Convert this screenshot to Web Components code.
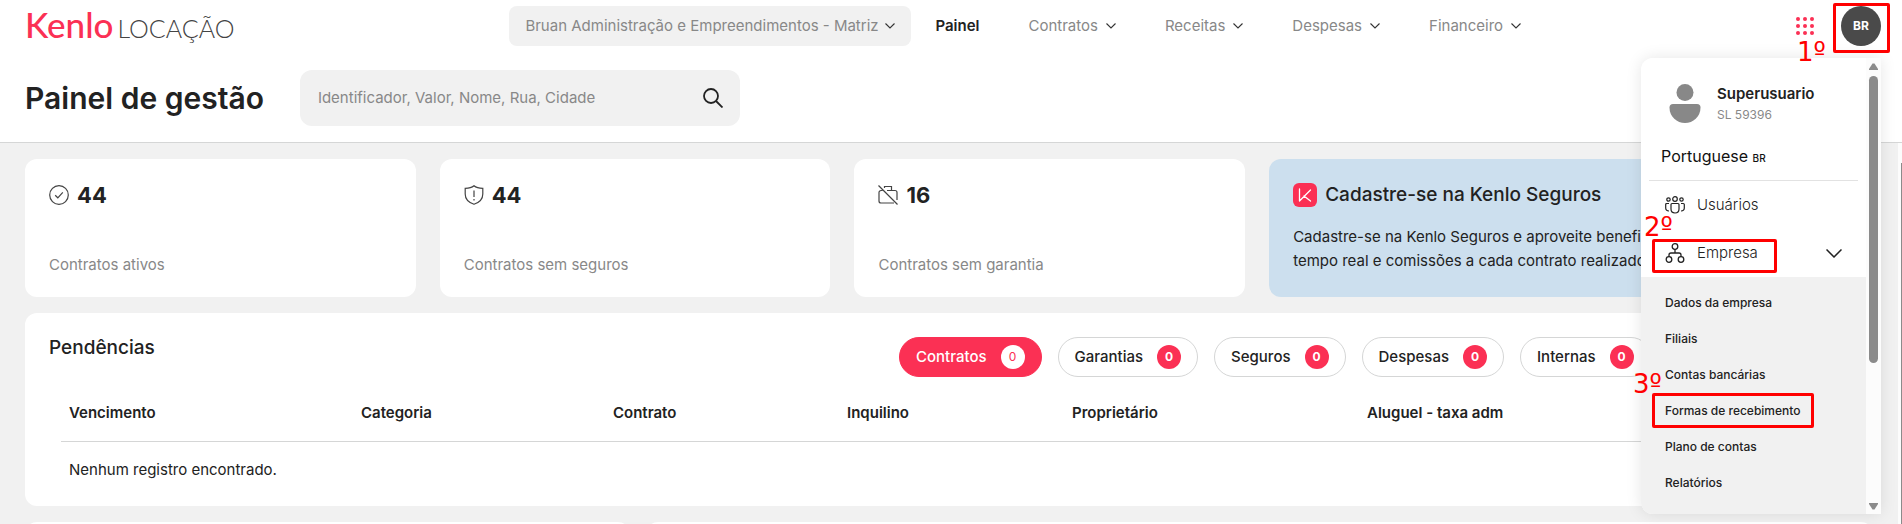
<!DOCTYPE html>
<html lang="pt-BR">
<head>
<meta charset="utf-8">
<title>Kenlo Locação</title>
<style>
  body {
    margin: 0;
    font-family: Inter, "Liberation Sans", sans-serif;
    font-size: 16px;
    line-height: 24px;
    color: #222222;
    --brand: #fb3054;
    --grey: #f1f1f1;
    --muted: #888888;
    --line: #d5d6d6;
  }
</style>
</head>
<body>
<kenlo-page>
  <kenlo-header slot="header">
    <kenlo-logo slot="logo">LOCAÇÃO</kenlo-logo>
    <company-select slot="nav" label="Empresa">Bruan Administração e Empreendimentos - Matriz</company-select>
    <nav-item slot="nav" active>Painel</nav-item>
    <nav-item slot="nav">Contratos</nav-item>
    <nav-item slot="nav">Receitas</nav-item>
    <nav-item slot="nav">Despesas</nav-item>
    <nav-item slot="nav">Financeiro</nav-item>
    <user-actions slot="actions" initials="BR"></user-actions>
    <span slot="title">Painel de gestão</span>
    <search-box slot="search" hint="Identificador, Valor, Nome, Rua, Cidade"></search-box>
  </kenlo-header>

  <stat-card slot="stats" icon="check" value="44">Contratos ativos</stat-card>
  <stat-card slot="stats" icon="shield" value="44">Contratos sem seguros</stat-card>
  <stat-card slot="stats" icon="caseOff" value="16">Contratos sem garantia</stat-card>
  <promo-card slot="stats" heading="Cadastre-se na Kenlo Seguros">Cadastre-se na Kenlo Seguros e aproveite beneficios<br>tempo real e comissões a cada contrato realizado</promo-card>

  <pending-panel heading="Pendências">
    <count-tab slot="tabs" count="0" active>Contratos</count-tab>
    <count-tab slot="tabs" count="0">Garantias</count-tab>
    <count-tab slot="tabs" count="0">Seguros</count-tab>
    <count-tab slot="tabs" count="0">Despesas</count-tab>
    <count-tab slot="tabs" count="0">Internas</count-tab>
  </pending-panel>

  <user-menu slot="overlay" name="Superusuario" code="SL 59396"></user-menu>
  <step-mark slot="overlay" style="--right: 12px; --top: 3px; --width: 57px; --height: 50px; --label-x: -39px; --label-y: 34px">1º</step-mark>
  <step-mark slot="overlay" style="--right: 125px; --top: 239px; --width: 125px; --height: 34px; --label-x: -11px; --label-y: -27px">2º</step-mark>
  <step-mark slot="overlay" style="--right: 88px; --top: 393px; --width: 162px; --height: 35px; --label-x: -22px; --label-y: -24px">3º</step-mark>
</kenlo-page>

<script>
const icons = {
  chevron: `<svg width="10" height="6" viewBox="0 0 10 6" fill="none" stroke="#333" stroke-width="1.1"><path d="M.5.5 5 5l4.500-4.500"/></svg>`,
  chevronBig: `<svg width="16" height="9" viewBox="0 0 16 9" fill="none" stroke="#222" stroke-width="1.500"><path d="M.5.5 8 8 15.500.5"/></svg>`,
  search: `<svg width="20" height="20" viewBox="0 0 20 20" fill="none" stroke="#222" stroke-width="1.800"><circle cx="8" cy="8" r="7"/><path d="m13 13 6.500 6.500"/></svg>`,
  check: `<svg width="20" height="20" viewBox="0 0 20 20" fill="none" stroke="#444" stroke-width="1.200"><circle cx="10" cy="10" r="9.300"/><path d="m6.200 10.300 2.600 2.500 5-5.500"/></svg>`,
  shield: `<svg width="20" height="20" viewBox="0 0 20 20" fill="none" stroke="#444" stroke-width="1.200"><path d="M10 .8C8 2.500 4.500 3.300 1.200 3.300V9c0 5 3.500 8.500 8.800 10.300C15.300 17.500 18.800 14 18.800 9V3.300C15.500 3.300 12 2.500 10 .8Z"/><path d="M10 5.500v6.500M10 14v1.500"/></svg>`,
  caseOff: `<svg width="20" height="20" viewBox="0 0 20 20" fill="none" stroke="#444" stroke-width="1.200"><path d="M.5.5l19 19M4.500 5.500H3a2 2 0 0 0-2 2V16a2 2 0 0 0 2 2h13M9 5.500h8a2 2 0 0 1 2 2V15M6.500 3V1.500h7v4"/></svg>`,
  brand: `<svg width="24" height="24" viewBox="0 0 24 24"><rect width="24" height="24" rx="6" fill="#fb3054"/><path d="M6.500 6v12L17.500 7M11 13l6.500 5" fill="none" stroke="#fff" stroke-width="1.300" stroke-linecap="round" stroke-linejoin="round"/></svg>`,
  apps: `<svg width="18" height="18" viewBox="0 0 18 18" fill="#fb3054"><circle cx="2" cy="2" r="2"/><circle cx="9" cy="2" r="2"/><circle cx="16" cy="2" r="2"/><circle cx="2" cy="9" r="2"/><circle cx="9" cy="9" r="2"/><circle cx="16" cy="9" r="2"/><circle cx="2" cy="16" r="2"/><circle cx="9" cy="16" r="2"/><circle cx="16" cy="16" r="2"/></svg>`,
  person: `<svg width="32" height="39" viewBox="0 0 32 39" fill="#888"><circle cx="16" cy="8.500" r="8.500"/><path d="M4 20h24q3.500 0 3.500 3.500C31.500 33 24 39 16 39S.5 33 .5 23.500Q.5 20 4 20Z"/></svg>`,
  users: `<svg width="20" height="18" viewBox="0 0 20 18" fill="none" stroke="#222" stroke-width="1.200"><circle cx="10" cy="3" r="2.300"/><circle cx="3.500" cy="3.500" r="1.700"/><circle cx="16.500" cy="3.500" r="1.700"/><path d="M6 8.500q0-1 1-1h6q1 0 1 1V13q0 4-4 4t-4-4ZM4 7.500H1.700q-1 0-1 1V12q0 2.800 3.300 3M16 7.500h2.300q1 0 1 1V12q0 2.800-3.300 3"/></svg>`,
  company: `<svg width="20" height="20" viewBox="0 0 20 20" fill="none" stroke="#222" stroke-width="1.300"><circle cx="10" cy="3.500" r="2.800"/><circle cx="4" cy="16.500" r="2.800"/><circle cx="16" cy="16.500" r="2.800"/><path d="M10 6.300V10M4 13.700V12q0-2 2-2h8q2 0 2 2v1.700"/></svg>`,
};

// Clones the given markup into an open shadow root
function render(host, html) {
  const template = document.createElement('template');
  template.innerHTML = html;
  host.attachShadow({ mode: 'open' }).appendChild(template.content.cloneNode(true));
}

class KenloPage extends HTMLElement {
  constructor() {
    super();
    render(this, /*html*/`
      <style>
        :host { display: flex; flex-direction: column; height: 100vh; position: relative; overflow: hidden; background: var(--grey); }
        .body { display: flex; flex: 1; min-height: 0; overflow: hidden; }
        main { flex: 1; min-width: 0; display: flex; flex-direction: column; gap: 16px; padding: 16px 25px 0; }
        .stats { display: grid; grid-template-columns: 22fr 22fr 22fr 34fr; gap: 24px; }
        .charts { display: grid; grid-template-columns: 33fr 67fr; gap: 16px; }
        .charts section { height: 240px; border-radius: 12px; background: white; }
        .scroll { display: flex; justify-content: flex-end; width: 4px; padding-top: 20px; box-sizing: border-box; background: #fcfcfc; }
        .scroll i { width: 1px; background: #8b8b8b; }
      </style>
      <slot name="header"></slot>
      <div class="body">
        <main>
          <div class="stats"><slot name="stats"></slot></div>
          <slot></slot>
          <div class="charts"><section></section><section></section></div>
        </main>
        <div class="scroll"><i></i></div>
      </div>
      <slot name="overlay"></slot>
    `);
  }
}

class KenloHeader extends HTMLElement {
  constructor() {
    super();
    render(this, /*html*/`
      <style>
        :host { display: block; background: white; border-bottom: 1px solid var(--line); }
        .top { display: flex; align-items: center; justify-content: space-between; height: 40px; padding: 6px 21px 0 25px; }
        nav { display: flex; align-items: center; }
        .bottom { display: flex; align-items: center; gap: 36px; padding: 24px 25px 16px; }
        h1 { margin: 0; font-size: 30px; line-height: 40px; font-weight: 600; }
      </style>
      <div class="top">
        <slot name="logo"></slot>
        <nav><slot name="nav"></slot></nav>
        <slot name="actions"></slot>
      </div>
      <div class="bottom">
        <h1><slot name="title"></slot></h1>
        <slot name="search"></slot>
      </div>
    `);
  }
}

class KenloLogo extends HTMLElement {
  constructor() {
    super();
    render(this, /*html*/`
      <style>
        :host { display: block; }
        a { display: flex; align-items: baseline; gap: 4px; color: #444; font-family: Lato, sans-serif; font-size: 25px; font-weight: 300; line-height: 40px; text-decoration: none; }
        b { color: var(--brand); font-size: 35px; font-weight: 500; }
      </style>
      <a href="#"><b>Kenlo</b><slot></slot></a>
    `);
  }
}

class CompanySelect extends HTMLElement {
  constructor() {
    super();
    render(this, /*html*/`
      <style>
        :host { display: grid; align-items: center; margin-right: 24px; }
        select { grid-area: 1 / 1; appearance: none; height: 40px; padding: 0 32px 0 16px; border: 0; border-radius: 8px; background: var(--grey); color: var(--muted); font: inherit; font-size: 15px; }
        svg { grid-area: 1 / 1; justify-self: end; margin-right: 16px; pointer-events: none; }
      </style>
      <select aria-label="${this.getAttribute('label')}"><option>${this.textContent}</option></select>
      ${icons.chevron}
    `);
  }
}

class NavItem extends HTMLElement {
  constructor() {
    super();
    const active = this.hasAttribute('active');
    render(this, /*html*/`
      <style>
        :host { display: block; margin-right: 49px; }
        :host(:last-of-type) { margin-right: 0; }
        a, button { display: flex; align-items: center; gap: 8px; padding: 0; border: 0; background: none; color: var(--muted); font: inherit; font-size: 15px; text-decoration: none; }
        a { color: #222; font-weight: 600; }
      </style>
      ${active ? '<a href="#"><slot></slot></a>' : `<button><slot></slot>${icons.chevron}</button>`}
    `);
  }
}

class UserActions extends HTMLElement {
  constructor() {
    super();
    render(this, /*html*/`
      <style>
        :host { display: flex; align-items: center; gap: 27px; }
        button { display: flex; align-items: center; justify-content: center; padding: 0; border: 0; background: none; font: inherit; }
        .avatar { width: 40px; height: 40px; border-radius: 50%; background: #4a4a4a; color: white; font-size: 12px; font-weight: 700; }
      </style>
      <button aria-label="Aplicativos">${icons.apps}</button>
      <button class="avatar">${this.getAttribute('initials')}</button>
    `);
  }
}

class SearchBox extends HTMLElement {
  constructor() {
    super();
    render(this, /*html*/`
      <style>
        :host { display: block; width: 440px; }
        form { display: flex; align-items: center; height: 56px; padding: 0 17px 0 18px; border-radius: 12px; background: var(--grey); }
        input { flex: 1; min-width: 0; padding: 0; border: 0; background: none; font: inherit; font-size: 15px; outline: 0; }
        input::placeholder { color: var(--muted); }
        button { display: flex; padding: 0; border: 0; background: none; }
      </style>
      <form>
        <input type="text" aria-label="Pesquisar" placeholder="${this.getAttribute('hint')}">
        <button type="button" aria-label="Buscar">${icons.search}</button>
      </form>
    `);
  }
}

class StatCard extends HTMLElement {
  constructor() {
    super();
    render(this, /*html*/`
      <style>
        :host { display: flex; flex-direction: column; justify-content: space-between; box-sizing: border-box; min-height: 138px; padding: 24px 24px 20px; border-radius: 12px; background: white; }
        div { display: flex; align-items: center; gap: 8px; }
        strong { font-size: 22px; font-weight: 700; }
        p { margin: 0; color: var(--muted); font-size: 15px; }
      </style>
      <div>${icons[this.getAttribute('icon')]}<strong>${this.getAttribute('value')}</strong></div>
      <p><slot></slot></p>
    `);
  }
}

class PromoCard extends HTMLElement {
  constructor() {
    super();
    render(this, /*html*/`
      <style>
        :host { display: block; box-sizing: border-box; padding: 24px; border-radius: 12px; background: #ccdfee; }
        h2 { display: flex; align-items: center; gap: 8px; margin: 0; font-size: 19px; font-weight: 500; }
        p { margin: 18px 0 0; font-size: 15px; }
      </style>
      <h2>${icons.brand}<span>${this.getAttribute('heading')}</span></h2>
      <p><slot></slot></p>
    `);
  }
}

class CountTab extends HTMLElement {
  constructor() {
    super();
    render(this, /*html*/`
      <style>
        :host { display: block; }
        button { display: flex; align-items: center; gap: 14px; height: 40px; padding: 0 16px; border: 1px solid var(--line); border-radius: 20px; background: white; color: #222; font: inherit; font-size: 15px; font-weight: 500; }
        span { width: 24px; border-radius: 50%; background: var(--brand); color: white; font-size: 12px; font-weight: 700; text-align: center; }
        :host([active]) button { border-color: var(--brand); background: var(--brand); color: white; }
        :host([active]) span { background: white; color: var(--brand); font-weight: 400; }
      </style>
      <button><slot></slot><span>${this.getAttribute('count')}</span></button>
    `);
  }
}

class PendingPanel extends HTMLElement {
  constructor() {
    super();
    render(this, /*html*/`
      <style>
        :host { display: block; padding: 24px 24px 12px; border-radius: 12px; background: white; }
        header { display: grid; grid-template-columns: 17fr 19fr; }
        h2 { margin: 0; font-size: 19px; line-height: 22px; font-weight: 500; }
        .tabs { display: flex; gap: 16px; }
        .table { padding: 8px 12px 0; }
        table { width: 100%; table-layout: fixed; border-collapse: collapse; font-size: 15px; text-align: left; }
        th { height: 56px; padding: 0 8px; border-bottom: 1px solid var(--line); font-weight: 600; }
        td { height: 48px; padding: 4px 8px 0; }
      </style>
      <header>
        <h2>${this.getAttribute('heading')}</h2>
        <div class="tabs"><slot name="tabs"></slot></div>
      </header>
      <div class="table">
        <table>
          <colgroup><col style="width: 292px"><col style="width: 252px"><col style="width: 234px"><col style="width: 225px"><col style="width: 295px"><col></colgroup>
          <thead><tr><th>Vencimento</th><th>Categoria</th><th>Contrato</th><th>Inquilino</th><th>Proprietário</th><th>Aluguel - taxa adm</th></tr></thead>
          <tbody><tr><td colspan="6">Nenhum registro encontrado.</td></tr></tbody>
        </table>
      </div>
    `);
  }
}

class UserMenu extends HTMLElement {
  constructor() {
    super();
    const links = ['Dados da empresa', 'Filiais', 'Contas bancárias', 'Formas de recebimento', 'Plano de contas', 'Relatórios'];
    render(this, /*html*/`
      <style>
        :host { position: absolute; top: 58px; right: 21px; display: flex; width: 240px; height: 456px; border-radius: 12px 0 0 12px; background: white; box-shadow: 0 0 16px rgba(0, 0, 0, .1); overflow: hidden; }
        .content { flex: 1; overflow: hidden; background: linear-gradient(white 50%, var(--grey) 50%); }
        .profile { display: flex; align-items: center; gap: 16px; padding: 24px 0 0 28px; }
        .profile strong { display: block; font-size: 15px; line-height: 24px; font-weight: 600; }
        .profile span { display: block; color: var(--muted); font-size: 12px; line-height: 18px; }
        .lang { margin: 0 8px; padding: 20px 12px 10px; border-bottom: 1px solid #e2e2e2; color: #111; }
        .lang small { font-size: 10px; font-weight: 500; }
        button { display: flex; align-items: center; gap: 12px; width: 100%; height: 48px; padding: 0 24px; border: 0; background: none; color: #222; font: inherit; font-size: 15px; font-weight: 300; text-align: left; }
        button span { flex: 1; }
        ul { margin: 0; padding: 8px 24px 12px; background: var(--grey); list-style: none; font-size: 12px; font-weight: 500; line-height: 36px; }
        a { color: inherit; text-decoration: none; }
        .scroll { display: flex; flex-direction: column; align-items: center; justify-content: space-between; width: 15px; padding: 5px 0 4px; box-sizing: border-box; background: #fcfcfc; }
        .thumb { width: 9px; height: 287px; margin: 6px 0 auto; border-radius: 5px; background: #8b8b8b; }
      </style>
      <div class="content">
        <div class="profile">${icons.person}<div><strong>${this.getAttribute('name')}</strong><span>${this.getAttribute('code')}</span></div></div>
        <div class="lang">Portuguese <small>BR</small></div>
        <button>${icons.users}<span>Usuários</span></button>
        <button>${icons.company}<span>Empresa</span>${icons.chevronBig}</button>
        <ul>${links.map(text => `<li><a href="#">${text}</a></li>`).join('')}</ul>
      </div>
      <div class="scroll">
        <svg width="9" height="7" fill="#8b8b8b"><path d="M3.500.5h2L9 6v1H0V6Z"/></svg>
        <div class="thumb"></div>
        <svg width="9" height="7" fill="#8b8b8b"><path d="M0 0h9v1L5.500 6.500h-2L0 1Z"/></svg>
      </div>
    `);
  }
}

class StepMark extends HTMLElement {
  constructor() {
    super();
    render(this, /*html*/`
      <style>
        :host { position: absolute; top: var(--top); right: var(--right); box-sizing: border-box; width: var(--width); height: var(--height); border: 3px solid red; border-radius: 2px; color: red; pointer-events: none; }
        span { position: absolute; left: var(--label-x); top: var(--label-y); font-family: "DejaVu Sans", sans-serif; font-size: 26px; }
      </style>
      <span><slot></slot></span>
    `);
  }
}

customElements.define('kenlo-page', KenloPage);
customElements.define('kenlo-header', KenloHeader);
customElements.define('kenlo-logo', KenloLogo);
customElements.define('company-select', CompanySelect);
customElements.define('nav-item', NavItem);
customElements.define('user-actions', UserActions);
customElements.define('search-box', SearchBox);
customElements.define('stat-card', StatCard);
customElements.define('promo-card', PromoCard);
customElements.define('count-tab', CountTab);
customElements.define('pending-panel', PendingPanel);
customElements.define('user-menu', UserMenu);
customElements.define('step-mark', StepMark);
</script>
</body>
</html>
